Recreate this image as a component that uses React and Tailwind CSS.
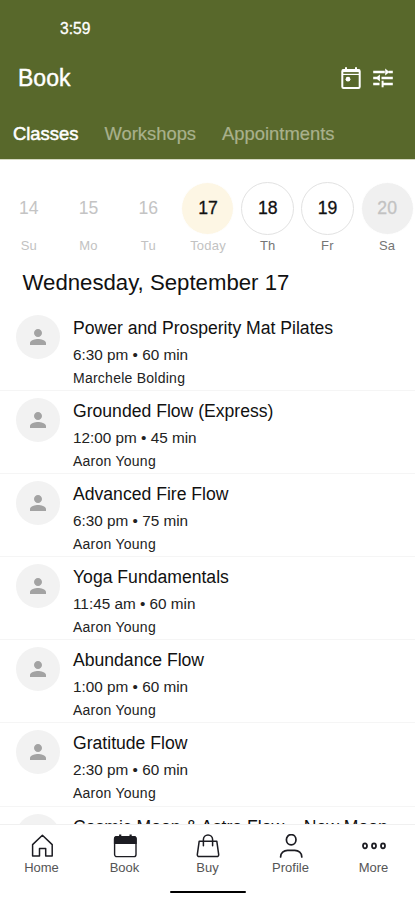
import React from 'react';
import { MdPerson } from 'react-icons/md';

const days = [
  { num: '14', label: 'Su', state: 'past' },
  { num: '15', label: 'Mo', state: 'past' },
  { num: '16', label: 'Tu', state: 'past' },
  { num: '17', label: 'Today', state: 'today' },
  { num: '18', label: 'Th', state: 'open' },
  { num: '19', label: 'Fr', state: 'open' },
  { num: '20', label: 'Sa', state: 'closed' },
];

const circleStyles = {
  past: 'border-transparent text-[#c4c4c4]',
  today: 'border-white bg-[#fdf6e4] text-[#111] [-webkit-text-stroke:0.3px]',
  open: 'border-[#e2e2e2] text-[#111] [-webkit-text-stroke:0.3px]',
  closed: 'border-white bg-[#f0f0f0] text-[#c2c2c2] [-webkit-text-stroke:0.3px]',
};

const labelStyles = {
  past: 'text-[#c2c2c2]',
  today: 'text-[#c2c2c2]',
  open: 'text-[#757575]',
  closed: 'text-[#757575]',
};

const classes = [
  { name: 'Power and Prosperity Mat Pilates', time: '6:30 pm', length: '60 min', teacher: 'Marchele Bolding' },
  { name: 'Grounded Flow (Express)', time: '12:00 pm', length: '45 min', teacher: 'Aaron Young' },
  { name: 'Advanced Fire Flow', time: '6:30 pm', length: '75 min', teacher: 'Aaron Young' },
  { name: 'Yoga Fundamentals', time: '11:45 am', length: '60 min', teacher: 'Aaron Young' },
  { name: 'Abundance Flow', time: '1:00 pm', length: '60 min', teacher: 'Aaron Young' },
  { name: 'Gratitude Flow', time: '2:30 pm', length: '60 min', teacher: 'Aaron Young' },
  // only the top of this one shows above the bottom bar
  { name: 'Cosmic Moon & Astro Flow – New Moon' },
];

const TodayIcon = () => (
  <svg className="h-6 w-6" viewBox="0 0 24 24" fill="none" stroke="currentColor" strokeWidth="2">
    <rect x="3.3" y="4" width="17.4" height="18" rx="1.2" />
    <path d="M3.3 4.8h17.4" strokeWidth="2.6" />
    <path d="M7 1.2v4M17 1.2v4" />
    <path d="M3.3 8.4h17.4" strokeWidth="1.2" />
    <circle cx="9" cy="13.2" r="2.4" fill="currentColor" stroke="none" />
  </svg>
);

const FilterIcon = () => (
  <svg className="h-[26px] w-[26px]" viewBox="0 0 26 26" fill="none" stroke="currentColor" strokeWidth="2.3">
    <path d="M3.2 7h11.600M18.500 7h4.300M3.200 13h4.300M11.500 13h11.300M3.200 19h6.300M12 19h10.800" />
    <path d="M15.200 3.600 19.400 7l-4.200 3.400zM9.900 9.600 5.700 13l4.200 3.400z" fill="currentColor" stroke="none" />
    <path d="M12.600 15.700v6.600" strokeWidth="2" />
  </svg>
);

const HomeIcon = () => (
  <svg className="h-6 w-6" viewBox="0 0 24 24" fill="none" stroke="currentColor" strokeWidth="1.5" strokeLinejoin="round">
    <path d="M2.600 10.600 12.400 1.200l9.800 9.400v11.400h-6.500v-7.400H9.500v7.400H2.600z" />
  </svg>
);

const BookIcon = () => (
  <svg className="h-6 w-6" viewBox="0 0 24 24" fill="none" stroke="currentColor" strokeWidth="1.400">
    <rect x="1.600" y="2.600" width="21.400" height="20" rx="2.200" />
    <path d="M1.600 9.200V4.800a2.200 2.200 0 0 1 2.200-2.200h17a2.200 2.200 0 0 1 2.200 2.200v4.400z" fill="currentColor" />
    <path d="M7.200 0.500v3M17.600 0.500v3" strokeWidth="2.200" />
  </svg>
);

const BuyIcon = () => (
  <svg className="h-6 w-6" viewBox="0 0 24 24" fill="none" stroke="currentColor" strokeWidth="1.500" strokeLinejoin="round" strokeLinecap="round">
    <path d="M3.200 7.200h17.600l1.900 13.400a1.800 1.800 0 0 1-1.800 2H3.100a1.800 1.800 0 0 1-1.800-2z" />
    <path d="M7.400 11.800V5.600a4.600 4.600 0 0 1 9.200 0v6.200" />
  </svg>
);

const ProfileIcon = () => (
  <svg className="h-6 w-6" viewBox="0 0 24 24" fill="none" stroke="currentColor" strokeWidth="1.700" strokeLinecap="round">
    <ellipse cx="12.200" cy="5.700" rx="4.800" ry="5.100" />
    <path d="M1.600 23c0-4 3.200-6.600 7-6.600h7.200c3.800 0 7 2.600 7 6.600" />
  </svg>
);

const MoreIcon = () => (
  <svg className="h-6 w-6" viewBox="0 0 24 24" fill="none" stroke="currentColor" strokeWidth="1.800">
    <ellipse cx="3" cy="11.800" rx="2" ry="2.500" />
    <ellipse cx="12" cy="11.800" rx="2" ry="2.500" />
    <ellipse cx="21" cy="11.800" rx="2" ry="2.500" />
  </svg>
);

const navItems = [
  { label: 'Home', icon: HomeIcon },
  { label: 'Book', icon: BookIcon },
  { label: 'Buy', icon: BuyIcon },
  { label: 'Profile', icon: ProfileIcon },
  { label: 'More', icon: MoreIcon },
];

const ClassRow = ({ item }) => (
  <li className="flex h-[83.1px] shrink-0 gap-[13px] border-b border-[#f5f5f5] pt-[7px] pl-4">
    <div className="flex h-11 w-11 items-center justify-center rounded-full bg-[#f2f2f2] text-[#a3a3a3]">
      <MdPerson className="h-6 w-6" />
    </div>
    <div className="whitespace-nowrap text-[#222]">
      <h3 className="text-[17.6px] leading-[26px] text-[#111]">{item.name}</h3>
      {item.time && (
        <>
          <p className="mt-[0.6px] text-[15.3px] leading-[26px]">
            {item.time} • {item.length}
          </p>
          <p className="text-[14px] leading-5 tracking-[0.25px]">{item.teacher}</p>
        </>
      )}
    </div>
  </li>
);

const App = () => {
  return (
    <div className="flex h-[900px] w-[415px] flex-col overflow-hidden bg-white font-['Liberation_Sans',Arial,sans-serif]">
      {/* Header */}
      <header className="flex h-[160px] shrink-0 flex-col border-b border-[#d6dac3] bg-[#58682b] text-white">
        <div className="pt-[19px] pl-[60px] text-[15.6px] leading-5 [-webkit-text-stroke:0.3px]">3:59</div>
        <div className="mt-6 flex h-[30px] items-center justify-between pr-[19px] pl-[18px]">
          <h1 className="text-[23px] [-webkit-text-stroke:0.4px]">Book</h1>
          <div className="flex items-center gap-[7px]">
            <TodayIcon />
            <FilterIcon />
          </div>
        </div>
        <nav className="mt-[29px] flex gap-[26px] pl-[13px] text-[18.4px] leading-6 text-[#a9b18d]">
          <span className="text-white [-webkit-text-stroke:0.5px]">Classes</span>
          <span className="[-webkit-text-stroke:0.2px]">Workshops</span>
          <span className="[-webkit-text-stroke:0.2px]">Appointments</span>
        </nav>
      </header>

      {/* Day picker */}
      <div className="-mr-[2px] -ml-[1px] grid shrink-0 grid-cols-7 pt-[22px]">
        {days.map((day) => (
          <div key={day.num} className="flex flex-col items-center">
            <div className={`flex h-[53px] w-[53px] items-center justify-center rounded-full border text-[17.6px] ${circleStyles[day.state]}`}>
              {day.num}
            </div>
            <span className={`mt-[3px] text-[13px] leading-4 tracking-[0.2px] ${labelStyles[day.state]}`}>{day.label}</span>
          </div>
        ))}
      </div>

      <h2 className="mt-[15px] shrink-0 pl-[22.5px] text-[22.2px] leading-7 text-[#111]">Wednesday, September 17</h2>

      {/* Class list */}
      <ul className="mt-[11px] flex min-h-0 flex-1 flex-col overflow-hidden">
        {classes.map((item) => (
          <ClassRow key={item.name} item={item} />
        ))}
      </ul>

      {/* Bottom navigation */}
      <footer className="flex h-[76px] shrink-0 flex-col items-center border-t border-[#f0f0f0] bg-white">
        <div className="grid w-full grid-cols-5 pt-[9px]">
          {navItems.map(({ label, icon: Icon }) => (
            <div key={label} className="flex flex-col items-center text-[#1c1c22]">
              <Icon />
              <span className="mt-[2px] text-[13px] leading-4 text-[#555]">{label}</span>
            </div>
          ))}
        </div>
        <div className="mt-[15px] h-[2px] w-[76px] rounded-full bg-black" />
      </footer>
    </div>
  );
};

export default App;
